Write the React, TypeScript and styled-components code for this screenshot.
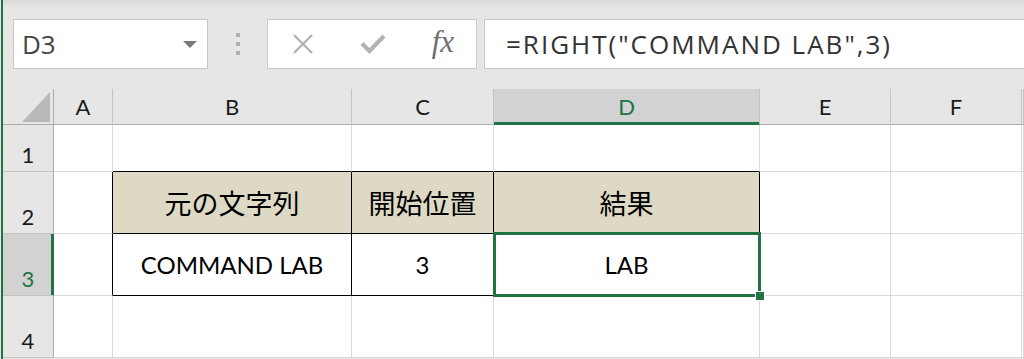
import React from "react";
import styled, { createGlobalStyle } from "styled-components";

const GlobalStyle = createGlobalStyle`
  html, body {
    margin: 0;
    padding: 0;
    background: #e6e6e6;
    overflow: hidden;
  }
`;

const GREEN = "#217346";
const GRID = "#dadada";
const HEAD_LINE = "#ababab";

const Page = styled.div`
  display: flex;
  flex-direction: column;
  height: 359px;
  margin-left: 1px;
  border-left: 2px solid ${GREEN};
  background: #e6e6e6;
  overflow: hidden;
`;

// ---------------------------------------------------------------- formula bar

const FormulaBar = styled.div`
  display: flex;
  align-items: flex-start;
  height: 89px;
  flex-shrink: 0;
  box-sizing: border-box;
  padding: 19px 0 0 10px;
  background: linear-gradient(to bottom, #d9d9d9 0px, #e6e6e6 7px);
`;

const Box = styled.div<{ $w?: number }>`
  display: flex;
  align-items: center;
  box-sizing: border-box;
  height: 50px;
  background: #fff;
  border: 1px solid #c8c8c8;
  ${({ $w }) => ($w ? `width: ${$w}px; flex-shrink: 0;` : "flex: 1; margin-right: -2px;")}
`;

const NameText = styled.span`
  flex: 1;
  padding-left: 8px;
  font-family: "Open Sans", "Liberation Sans", sans-serif;
  font-size: 26px;
  color: #444;
`;

const DropArrow = styled.div`
  width: 0;
  height: 0;
  margin-right: 10px;
  border-left: 7px solid transparent;
  border-right: 7px solid transparent;
  border-top: 7px solid #7a7a7a;
`;

const Divider = styled.div`
  display: flex;
  flex-direction: column;
  align-items: center;
  justify-content: center;
  gap: 5px;
  width: 59px;
  height: 50px;
  flex-shrink: 0;
`;

const Dot = styled.span`
  width: 4px;
  height: 4px;
  background: #b0b0b0;
`;

const FnButtons = styled(Box)`
  justify-content: space-between;
  padding: 0 22px 0 24px;
  margin-right: 7px;
`;

const Fx = styled.span`
  font-family: "Liberation Serif", "DejaVu Serif", serif;
  font-style: italic;
  font-size: 31px;
  color: #6e6e6e;
  margin-top: -4px;
`;

const FormulaText = styled.span`
  padding-left: 21px;
  font-family: "Open Sans", "Liberation Sans", sans-serif;
  font-size: 26px;
  letter-spacing: 2px;
  color: #333;
  white-space: nowrap;
`;

// ---------------------------------------------------------------- sheet

const Sheet = styled.div`
  display: grid;
  grid-template-columns: 51px 59px 239px 142px 266px 131px 131px 1fr;
  grid-template-rows: 36px 47px 62px 62px 62px;
  background: #fff;
  font-family: Lato, "Noto Sans CJK JP", sans-serif;
`;

const Cell = styled.div<{ $r?: string; $b?: string; $bg?: string; $jp?: boolean }>`
  position: relative;
  display: flex;
  align-items: center;
  justify-content: center;
  box-sizing: border-box;
  border-right: 1px solid ${({ $r }) => $r || GRID};
  border-bottom: 1px solid ${({ $b }) => $b || GRID};
  background: ${({ $bg }) => $bg || "#fff"};
  font-size: ${({ $jp }) => ($jp ? "27px" : "24px")};
  color: #000;
  white-space: nowrap;
`;

const ColHead = styled.div<{ $active?: boolean }>`
  display: flex;
  align-items: center;
  justify-content: center;
  box-sizing: border-box;
  background: ${({ $active }) => ($active ? "#d2d2d2" : "#e6e6e6")};
  border-right: 1px solid #c4c4c4;
  border-bottom: 1px solid ${({ $active }) => ($active ? GREEN : HEAD_LINE)};
  box-shadow: ${({ $active }) => ($active ? `inset 0 -2px 0 ${GREEN}` : "none")};
  font-size: 22px;
  color: ${({ $active }) => ($active ? GREEN : "#1a1a1a")};
`;

const RowHead = styled.div<{ $active?: boolean }>`
  display: flex;
  align-items: flex-end;
  justify-content: center;
  box-sizing: border-box;
  padding-bottom: 3px;
  background: ${({ $active }) => ($active ? "#d2d2d2" : "#e6e6e6")};
  border-right: 1px solid ${({ $active }) => ($active ? GREEN : HEAD_LINE)};
  border-bottom: 1px solid #c4c4c4;
  box-shadow: ${({ $active }) => ($active ? `inset -2px 0 0 ${GREEN}` : "none")};
  font-size: 22px;
  color: ${({ $active }) => ($active ? GREEN : "#1a1a1a")};
`;

const Corner = styled.div`
  display: flex;
  align-items: flex-end;
  justify-content: flex-end;
  box-sizing: border-box;
  padding: 0 3px 2px 0;
  background: #e6e6e6;
  border-right: 1px solid ${HEAD_LINE};
  border-bottom: 1px solid ${HEAD_LINE};
`;

const CornerTriangle = styled.div`
  width: 28px;
  height: 30px;
  background: #b9b9b9;
  clip-path: polygon(100% 0, 100% 100%, 0 100%);
`;

const Selection = styled.div`
  position: absolute;
  inset: -2px -2px -2px -1px;
  z-index: 2;
  border: 3px solid ${GREEN};
  pointer-events: none;
`;

const FillHandle = styled.div`
  position: absolute;
  right: -6px;
  bottom: -6px;
  z-index: 3;
  width: 8px;
  height: 8px;
  background: ${GREEN};
  border: 1px solid #fff;
`;

const TAN = "#ddd9c4";
const COLS = ["A", "B", "C", "D", "E", "F", ""];

const CrossIcon = () => (
  <svg width="22" height="20" viewBox="0 0 22 20">
    <path d="M2 1 L20 19 M20 1 L2 19" stroke="#b3b3b3" strokeWidth="2.4" fill="none" />
  </svg>
);

const CheckIcon = () => (
  <svg width="26" height="20" viewBox="0 0 26 20">
    <path d="M2 9.5 L9.5 17 L24 2" stroke="#b3b3b3" strokeWidth="4.2" fill="none" />
  </svg>
);

export default function App() {
  return (
    <>
      <GlobalStyle />
      <Page>
        <FormulaBar>
          <Box $w={195}>
            <NameText>D3</NameText>
            <DropArrow />
          </Box>
          <Divider>
            <Dot />
            <Dot />
            <Dot />
          </Divider>
          <FnButtons $w={210}>
            <CrossIcon />
            <CheckIcon />
            <Fx>fx</Fx>
          </FnButtons>
          <Box>
            <FormulaText>=RIGHT("COMMAND LAB",3)</FormulaText>
          </Box>
        </FormulaBar>

        <Sheet>
          <Corner>
            <CornerTriangle />
          </Corner>
          {COLS.map((c, i) => (
            <ColHead key={i} $active={c === "D"}>
              {c}
            </ColHead>
          ))}

          {/* row 1 */}
          <RowHead>1</RowHead>
          <Cell />
          <Cell $b="#000" />
          <Cell $b="#000" />
          <Cell $b="#000" />
          <Cell />
          <Cell />
          <Cell />

          {/* row 2 */}
          <RowHead>2</RowHead>
          <Cell $r="#000" />
          <Cell $r="#000" $b="#000" $bg={TAN} $jp>
            元の文字列
          </Cell>
          <Cell $r="#000" $b="#000" $bg={TAN} $jp>
            開始位置
          </Cell>
          <Cell $r="#000" $b="#000" $bg={TAN} $jp>
            結果
          </Cell>
          <Cell />
          <Cell />
          <Cell />

          {/* row 3 */}
          <RowHead $active>3</RowHead>
          <Cell $r="#000" />
          <Cell $r="#000" $b="#000">
            COMMAND LAB
          </Cell>
          <Cell $r="#000" $b="#000">
            3
          </Cell>
          <Cell $r="#000" $b="#000">
            LAB
            <Selection />
            <FillHandle />
          </Cell>
          <Cell />
          <Cell />
          <Cell />

          {/* row 4 */}
          <RowHead>4</RowHead>
          <Cell />
          <Cell />
          <Cell />
          <Cell />
          <Cell />
          <Cell />
          <Cell />
        </Sheet>
      </Page>
    </>
  );
}
